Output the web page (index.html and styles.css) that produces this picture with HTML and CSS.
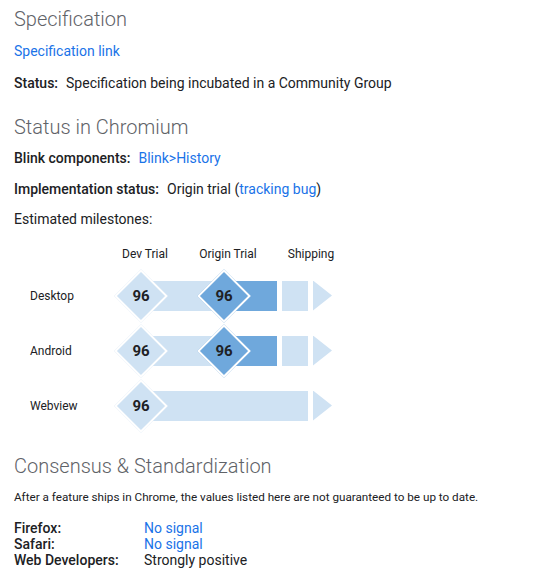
FILE: index.html
```html
<!DOCTYPE html>
<html lang="en">
<head>
<meta charset="utf-8">
<title>Feature status</title>
<link rel="stylesheet" href="styles.css">
</head>
<body>
<section class="page">
  <h2 class="heading h-spec">Specification</h2>
  <p class="line l-link"><a href="#" class="link">Specification link</a></p>
  <p class="line l-status"><span class="label">Status:</span>Specification being incubated in a Community Group</p>

  <h2 class="heading h-chrom">Status in Chromium</h2>
  <p class="line l-blink"><span class="label">Blink components:</span><a href="#" class="link">Blink&gt;History</a></p>
  <p class="line l-impl"><span class="label">Implementation status:</span>Origin trial (<a href="#" class="link">tracking bug</a>)</p>
  <p class="line l-est">Estimated milestones:</p>

  <div class="chart">
    <div class="chart-head">
      <span class="col c1">Dev Trial</span>
      <span class="col c2">Origin Trial</span>
      <span class="col c3">Shipping</span>
    </div>

    <div class="row">
      <span class="row-label">Desktop</span>
      <div class="track">
        <div class="seg light w-dev"><span class="diamond">96</span></div>
        <div class="seg dark w-ot"><span class="diamond dk">96</span></div>
        <div class="seg light w-ship"></div>
        <div class="arrow"></div>
      </div>
    </div>

    <div class="row">
      <span class="row-label">Android</span>
      <div class="track">
        <div class="seg light w-dev"><span class="diamond">96</span></div>
        <div class="seg dark w-ot"><span class="diamond dk">96</span></div>
        <div class="seg light w-ship"></div>
        <div class="arrow"></div>
      </div>
    </div>

    <div class="row">
      <span class="row-label">Webview</span>
      <div class="track">
        <div class="seg light w-full"><span class="diamond">96</span></div>
        <div class="arrow"></div>
      </div>
    </div>
  </div>

  <h2 class="heading h-cons">Consensus &amp; Standardization</h2>
  <p class="note">After a feature ships in Chrome, the values listed here are not guaranteed to be up to date.</p>
  <div class="signals">
    <span class="sig-label">Firefox:</span><a href="#" class="link">No signal</a>
    <span class="sig-label">Safari:</span><a href="#" class="link">No signal</a>
    <span class="sig-label">Web Developers:</span><span>Strongly positive</span>
  </div>
</section>
</body>
</html>
```

FILE: styles.css
```css
html, body {
  margin: 0;
  padding: 0;
  background: #ffffff;
}
body {
  font-family: Roboto, "Noto Sans", Arial, sans-serif;
  color: #202124;
  font-size: 14px;
}
.page {
  padding: 0 14px;
}
.heading {
  font-size: 20px;
  line-height: 24px;
  font-weight: 300;
  color: #5f6368;
  margin: 0;
}
.h-spec { margin-top: 7px; }
.h-chrom { margin-top: 22px; }
.h-cons { margin-top: 21px; }
.line {
  margin: 0;
  line-height: 20px;
  font-size: 14px;
}
.l-link { margin-top: 10px; }
.l-status { margin-top: 12px; }
.l-blink { margin-top: 9px; }
.l-impl { margin-top: 11px; }
.l-est { margin-top: 10px; }
.label {
  font-weight: 500;
  margin-right: 8px;
}
.link {
  color: #1a73e8;
  text-decoration: none;
}

.chart {
  margin-top: 17px;
  padding-left: 16px;
}
.chart-head {
  display: flex;
  padding-left: 87px;
  font-size: 12px;
  line-height: 16px;
}
.col { text-align: center; }
.c1 { width: 56px; }
.c2 { width: 110px; }
.c3 { width: 56px; }

.row {
  display: flex;
  align-items: center;
  height: 55px;
}
.chart-head + .row { margin-top: 6px; }
.row-label {
  width: 111px;
  font-size: 12px;
  line-height: 16px;
}
.track {
  display: flex;
  align-items: stretch;
  height: 30px;
}
.seg {
  position: relative;
  height: 30px;
}
.light { background: #cfe2f3; }
.dark { background: #6fa8dc; }
.w-dev { width: 83px; }
.w-ot { width: 53px; margin-right: 5px; }
.w-ship { width: 26px; margin-right: 5px; }
.w-full { width: 167px; margin-right: 5px; }
.arrow {
  width: 19px;
  height: 30px;
  background: #cfe2f3;
  clip-path: polygon(0 0, 100% 50%, 0 100%);
}
.diamond {
  position: absolute;
  left: -27px;
  top: -12px;
  width: 54px;
  height: 54px;
  display: flex;
  align-items: center;
  justify-content: center;
  font-size: 15px;
  font-weight: 700;
  color: #202124;
  z-index: 1;
}
.diamond::before {
  content: "";
  position: absolute;
  left: 8px;
  top: 8px;
  width: 38px;
  height: 38px;
  box-sizing: border-box;
  border: 2px solid #ffffff;
  background: #cfe2f3;
  transform: rotate(45deg);
  z-index: -1;
}
.diamond.dk::before { background: #6fa8dc; }

.note {
  margin: 11px 0 0;
  font-size: 11.7px;
  line-height: 16px;
}
.signals {
  margin-top: 15px;
  display: grid;
  grid-template-columns: 130px auto;
  line-height: 16px;
  font-size: 14px;
}
.sig-label { font-weight: 500; }
```
